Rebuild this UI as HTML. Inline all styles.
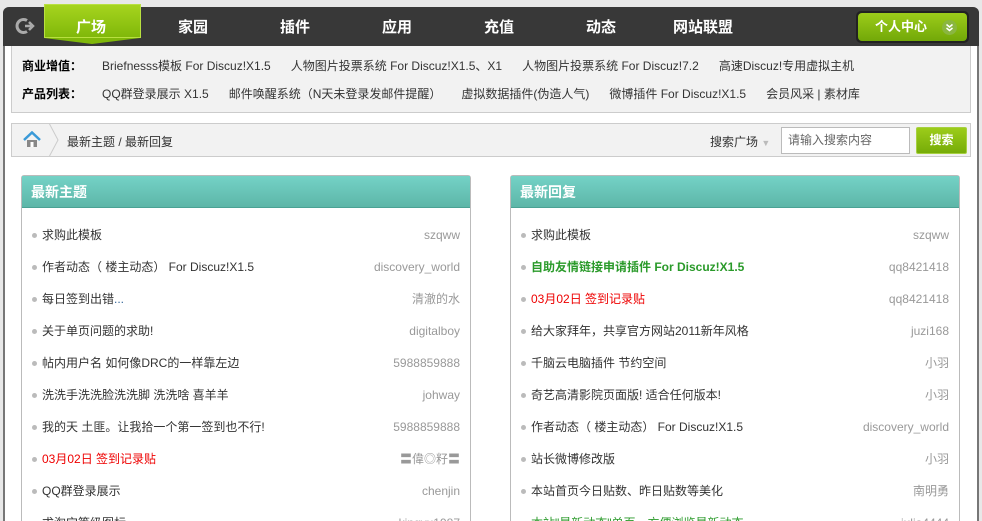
<!DOCTYPE html>
<html style="width:982px;height:521px;overflow:hidden"><head><meta charset="utf-8"><style>
*{margin:0;padding:0;box-sizing:border-box}
body{width:982px;height:521px;overflow:hidden;background:#e8e8e8;font-family:"Liberation Sans","Noto Sans CJK SC",sans-serif;font-size:12px;color:#333;position:relative}
.frame{position:absolute;left:3px;top:7px;width:976px;height:514px;background:#fff;border-left:2px solid #777;border-right:2px solid #777;border-radius:6px 6px 0 0}
.hdr{position:absolute;left:3px;top:7px;width:976px;height:39px;background:#383838;border-radius:6px 6px 0 0}
.tab{position:absolute;left:44px;top:4px;width:97px;height:34px;background:linear-gradient(#a6d41e,#80b80a);border:1px solid #b8e040}
.tab:after{content:"";position:absolute;left:-1px;top:33px;border-left:48px solid transparent;border-right:48px solid transparent;border-top:6px solid #80b80a}
.nav{position:absolute;top:16px;color:#fff;font-weight:bold;font-size:15px;transform:translateX(-50%)}
.pc{position:absolute;left:856px;top:11px;width:113px;height:32px;background:#222;border-radius:5px;padding:2px}
.pc div{width:109px;height:28px;border-radius:4px;background:linear-gradient(#9ccc1a,#72a808);color:#fff;font-weight:bold;font-size:13px;line-height:28px;padding-left:17px;position:relative}
.pc svg{position:absolute;right:10px;top:7px}
.sub{position:absolute;left:11px;top:46px;width:960px;height:67px;background:#f2f2f2;border:1px solid #ccc;border-top:none}
.row{position:absolute;left:10px;white-space:nowrap;font-size:12px}
.row b{color:#000;margin-right:20px}
.row a{color:#333;margin-right:20px}
.bc{position:absolute;left:11px;top:123px;width:960px;height:34px;background:#f2f2f2;border:1px solid #ccc}
.panel{position:absolute;top:175px;width:450px;height:360px;border:1px solid #bbb;border-radius:3px 3px 0 0;background:#fff}
.ph{height:32px;background:linear-gradient(#74d2c6,#5db6a8);color:#fff;font-weight:bold;font-size:14px;line-height:32px;padding-left:9px;border-bottom:1px solid #4aa294}
.li{height:32px;line-height:32px;position:relative;padding-left:20px}
.li:before{content:"";position:absolute;left:10px;top:14px;width:5px;height:5px;border-radius:50%;background:#bbb}
.li i{font-style:normal;position:absolute;right:10px;color:#999}
.list{padding-top:11px}
</style></head><body>
<div class="frame"></div>
<div class="hdr"></div>
<svg style="position:absolute;left:14px;top:17px" width="22" height="18" viewBox="0 0 22 18"><path d="M13 3.5A6.5 6.5 0 1 0 13 14.5" fill="none" stroke="#aaa" stroke-width="3"/><path d="M11 9h6M15 5l4 4-4 4" fill="none" stroke="#aaa" stroke-width="2.5"/></svg>
<div class="tab"></div>
<div class="nav" style="left:91px">广场</div>
<div class="nav" style="left:193px">家园</div>
<div class="nav" style="left:295px">插件</div>
<div class="nav" style="left:397px">应用</div>
<div class="nav" style="left:499px">充值</div>
<div class="nav" style="left:601px">动态</div>
<div class="nav" style="left:703px">网站联盟</div>
<div class="pc"><div>个人中心<svg width="15" height="15" viewBox="0 0 15 15"><circle cx="7.5" cy="7.5" r="7.5" fill="#8ab640"/><path d="M4.5 4.5l3 2.5 3-2.5M4.5 8l3 2.5 3-2.5" fill="none" stroke="#fff" stroke-width="1.5"/></svg></div></div>
<div class="sub">
<div class="row" style="top:11px"><b>商业增值：</b><a>Briefnesss模板 For Discuz!X1.5</a><a>人物图片投票系统 For Discuz!X1.5、X1</a><a>人物图片投票系统 For Discuz!7.2</a><a>高速Discuz!专用虚拟主机</a></div>
<div class="row" style="top:39px"><b>产品列表：</b><a>QQ群登录展示 X1.5</a><a>邮件唤醒系统（N天未登录发邮件提醒）</a><a>虚拟数据插件(伪造人气)</a><a>微博插件 For Discuz!X1.5</a><a>会员风采 | 素材库</a></div>
</div>
<div class="bc">
<svg style="position:absolute;left:11px;top:7px" width="18" height="17" viewBox="0 0 18 17"><path d="M1 9L9 1.5 17 9" fill="none" stroke="#3a9ad8" stroke-width="2.5"/><rect x="4" y="9" width="10" height="7" fill="#888"/><rect x="7.5" y="11" width="3" height="5" fill="#fff"/></svg>
<svg style="position:absolute;left:36px;top:-1px" width="12" height="34"><path d="M1 0L10 17 1 34" fill="none" stroke="#ccc"/></svg>
<div style="position:absolute;left:55px;top:9px;color:#333">最新主题 / 最新回复</div>
<div style="position:absolute;left:698px;top:9px;color:#333">搜索广场 <span style="color:#bbb;font-size:9px">▼</span></div>
<div style="position:absolute;left:769px;top:3px;width:129px;height:27px;border:1px solid #bbb;background:#fff;color:#666;line-height:25px;padding-left:6px">请输入搜索内容</div>
<div style="position:absolute;left:904px;top:3px;width:51px;height:27px;border:1px solid #a6d040;border-radius:2px;background:linear-gradient(#9ccc1a,#76ac08);color:#fff;font-weight:bold;text-align:center;line-height:25px">搜索</div>
</div>
<div class="panel" style="left:21px"><div class="ph">最新主题</div><div class="list">
<div class="li">求购此模板<i>szqww</i></div>
<div class="li">作者动态（ 楼主动态） For Discuz!X1.5<i>discovery_world</i></div>
<div class="li">每日签到出错<span style="color:#369">...</span><i>清澈的水</i></div>
<div class="li">关于单页问题的求助!<i>digitalboy</i></div>
<div class="li">帖内用户名 如何像DRC的一样靠左边<i>5988859888</i></div>
<div class="li">洗洗手洗洗脸洗洗脚 洗洗啥 喜羊羊<i>johway</i></div>
<div class="li">我的天 土匪。让我拾一个第一签到也不行!<i>5988859888</i></div>
<div class="li" style="color:#e00">03月02日 签到记录贴<i>〓偉◎籽〓</i></div>
<div class="li">QQ群登录展示<i>chenjin</i></div>
<div class="li">求淘宝等级图标<i>kingyu1987</i></div>
</div></div>
<div class="panel" style="left:510px"><div class="ph">最新回复</div><div class="list">
<div class="li">求购此模板<i>szqww</i></div>
<div class="li" style="color:#2a9a2a;font-weight:bold">自助友情链接申请插件 For Discuz!X1.5<i style="font-weight:normal">qq8421418</i></div>
<div class="li" style="color:#e00">03月02日 签到记录贴<i>qq8421418</i></div>
<div class="li">给大家拜年，共享官方网站2011新年风格<i>juzi168</i></div>
<div class="li">千脑云电脑插件 节约空间<i>小羽</i></div>
<div class="li">奇艺高清影院页面版! 适合任何版本!<i>小羽</i></div>
<div class="li">作者动态（ 楼主动态） For Discuz!X1.5<i>discovery_world</i></div>
<div class="li">站长微博修改版<i>小羽</i></div>
<div class="li">本站首页今日贴数、昨日贴数等美化<i>南明勇</i></div>
<div class="li" style="color:#2a9a2a">本站"最新动态"单页，方便浏览最新动态<i>julia4444</i></div>
</div></div>
</body></html>
